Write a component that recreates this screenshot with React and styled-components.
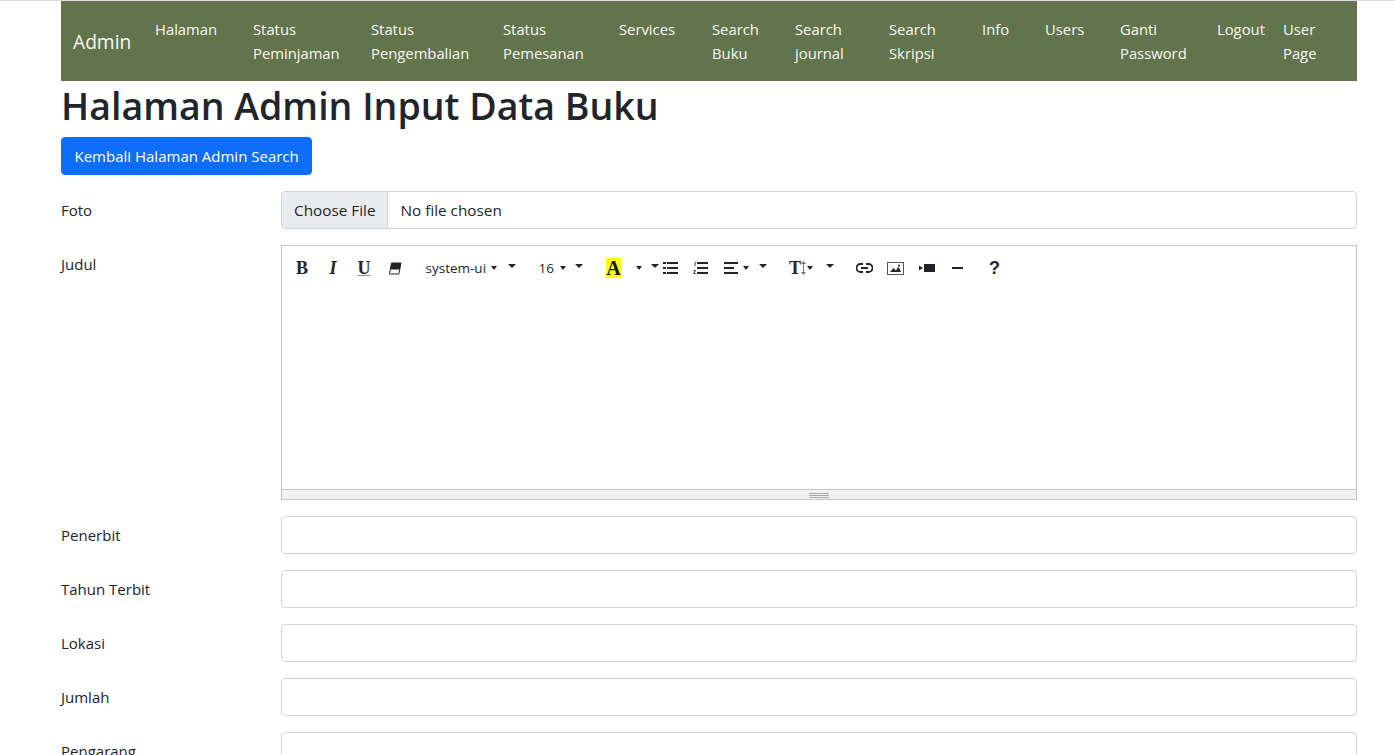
import React from 'react';
import styled, { createGlobalStyle } from 'styled-components';

const GlobalStyle = createGlobalStyle`
  html, body {
    margin: 0;
    height: 755px;
    overflow: hidden;
    background: #fff;
  }
  body {
    border-top: 1px solid #dcdcdc;
    box-sizing: border-box;
    color: #212529;
    font-family: "Open Sans", "Noto Sans", sans-serif;
    font-size: 15px;
    line-height: 24px;
  }
  * { box-sizing: border-box; }
`;

const Page = styled.div`
  width: 1296px;
  margin-left: 61px;
`;

// navbar
const Navbar = styled.nav`
  display: flex;
  align-items: flex-start;
  height: 80px;
  padding: 16px 0 0 12px;
  background: #62744b;
  color: #f8f9f2;
  font-size: 14.8px;
`;

const Brand = styled.a`
  width: 82px;
  padding-top: 9px;
  font-size: 19.2px;
  line-height: 32px;
`;

const NavItem = styled.a`
  width: ${p => p.$w}px;
  white-space: nowrap;
`;

const Title = styled.h1`
  margin: 0 0 6px;
  font-size: 37.5px;
  font-weight: 600;
  line-height: 50px;
`;

const BackButton = styled.button`
  display: block;
  height: 38px;
  margin-bottom: 16px;
  padding: 0 12.5px;
  border: 1px solid #0d6efd;
  border-radius: 4px;
  background: #0d6efd;
  color: #fff;
  font: inherit;
`;

// form
const Row = styled.div`
  display: grid;
  grid-template-columns: 196px 1fr;
  column-gap: 24px;
  margin-bottom: 16px;
`;

const Label = styled.label`
  padding-top: 7px;
`;

const Input = styled.input`
  display: block;
  width: 100%;
  height: 38px;
  padding: 6px 12px;
  border: 1px solid #ced4da;
  border-radius: 4px;
  background: #fff;
  color: #212529;
  font: inherit;
  font-size: 15.3px;

  &::file-selector-button {
    height: 38px;
    margin: -7px 12px -6px -12px;
    padding: 6px 12px;
    border: 0;
    border-right: 1px solid #ced4da;
    background: #e9ecef;
    color: #212529;
    font: inherit;
  }
`;

// editor
const Editor = styled.div`
  display: flex;
  flex-direction: column;
  height: 255px;
  border: 1px solid #c4c4c4;
`;

const Toolbar = styled.div`
  display: flex;
  align-items: center;
  height: 30px;
  margin-top: 7px;
  padding-left: 4.5px;
`;

const Tool = styled.span`
  display: flex;
  flex: none;
  align-items: center;
  justify-content: ${p => (p.$start ? 'flex-start' : 'center')};
  width: ${p => p.$w || 31}px;
  height: 30px;
  margin-left: ${p => p.$ml || 0}px;
  padding-left: ${p => p.$pl || 0}px;
  color: #212529;
  font-size: 13.5px;
  white-space: nowrap;
`;

// $small is the caret inside a button, the other one is the dropdown toggle
const Caret = styled.i`
  flex: none;
  width: 0;
  height: 0;
  margin: ${p => (p.$small ? `0 0 0 ${p.$ml || 5}px` : '0 0 4px')};
  border-top: 4px solid #212529;
  border-left: ${p => (p.$small ? 3.5 : 4)}px solid transparent;
  border-right: ${p => (p.$small ? 3.5 : 4)}px solid transparent;
`;

const Glyph = styled.b`
  font-family: "Liberation Serif", serif;
  font-size: 18px;
  font-style: ${p => (p.$italic ? 'italic' : 'normal')};
  font-weight: 700;
  line-height: 20px;
  text-decoration: ${p => (p.$underline ? 'underline' : 'none')};
  text-decoration-color: #8a8d90;
`;

const ColorGlyph = styled(Glyph)`
  display: block;
  width: 15px;
  height: 20px;
  background: #ffff00;
  color: #111;
  font-size: 20px;
  text-align: center;
`;

const Help = styled.b`
  font-family: "Liberation Sans", sans-serif;
  font-size: 18px;
`;

const EditArea = styled.div`
  flex: 1;
`;

const ResizeBar = styled.div`
  display: flex;
  flex-direction: column;
  align-items: center;
  gap: 1px;
  height: 10px;
  padding-top: 3px;
  border-top: 1px solid #c4c4c4;
  background: #f2f2f2;
`;

const Grip = styled.i`
  width: 20px;
  height: 1px;
  background: #a8a8a8;
`;

const Svg = styled.svg`
  display: block;
  fill: #212529;
`;

const EraserIcon = () => (
  <Svg width="14" height="13" viewBox="0 0 14 13">
    <path d="M3.500 1h9.500l-2.200 11H1.500z" fill="none" stroke="#212529" />
    <path d="M3.500 1h9.500l-1.200 6.500H2.300z" />
  </Svg>
);

const UlIcon = () => (
  <Svg width="15" height="14" viewBox="0 0 15 14">
    <rect x="0" y="1" width="3" height="2" />
    <rect x="0" y="6" width="3" height="2" />
    <rect x="0" y="11" width="3" height="2" />
    <rect x="4" y="1" width="11" height="2" />
    <rect x="4" y="6" width="11" height="2" />
    <rect x="4" y="11" width="11" height="2" />
  </Svg>
);

const OlIcon = () => (
  <Svg width="15" height="14" viewBox="0 0 15 14">
    <path d="M1.500 1 L2.500 .5 V5 H1.700 V1.700 L1.500 1.800z" />
    <path d="M.5 9h2.200v.7l-1.300 2.500h1.400V13H.4v-.7l1.300-2.500H.5z" />
    <rect x="4" y="1" width="11" height="2" />
    <rect x="4" y="6" width="11" height="2" />
    <rect x="4" y="11" width="11" height="2" />
  </Svg>
);

const AlignIcon = () => (
  <Svg width="14" height="12" viewBox="0 0 14 12">
    <rect x="0" y="0" width="14" height="2" />
    <rect x="0" y="5" width="10" height="2" />
    <rect x="0" y="10" width="14" height="2" />
  </Svg>
);

const HeightIcon = () => (
  <Svg width="5" height="14" viewBox="0 0 5 14">
    <path d="M2.500 0 5 3H3v8h2l-2.500 3L0 11h2V3H0z" fill="#777" />
  </Svg>
);

const LinkIcon = () => (
  <Svg width="17" height="10" viewBox="0 0 17 10">
    <path
      d="M7 1H4.500a4 4 0 0 0 0 8H7M10 1h2.500a4 4 0 0 1 0 8H10M5 5h7"
      fill="none"
      stroke="#212529"
      strokeWidth="1.800"
    />
  </Svg>
);

const PictureIcon = () => (
  <Svg width="17" height="13" viewBox="0 0 17 13">
    <rect x=".5" y=".5" width="16" height="12" fill="none" stroke="#555" />
    <path d="M3 10l3.500-4 2.500 2.500 2.500-4L14 10z" />
    <circle cx="12" cy="3.500" r="1" />
  </Svg>
);

const VideoIcon = () => (
  <Svg width="16" height="10" viewBox="0 0 16 10">
    <rect x="5" y="1" width="11" height="8" />
    <path d="M0 2.500 4 5 0 7.500z" />
  </Svg>
);

const MinusIcon = () => (
  <Svg width="11" height="2" viewBox="0 0 11 2">
    <rect width="11" height="2" />
  </Svg>
);

const navItems = [
  { w: 98, lines: ['Halaman'] },
  { w: 118, lines: ['Status', 'Peminjaman'] },
  { w: 132, lines: ['Status', 'Pengembalian'] },
  { w: 116, lines: ['Status', 'Pemesanan'] },
  { w: 93, lines: ['Services'] },
  { w: 83, lines: ['Search', 'Buku'] },
  { w: 94, lines: ['Search', 'journal'] },
  { w: 93, lines: ['Search', 'Skripsi'] },
  { w: 63, lines: ['Info'] },
  { w: 75, lines: ['Users'] },
  { w: 97, lines: ['Ganti', 'Password'] },
  { w: 66, lines: ['Logout'] },
  { w: 60, lines: ['User', 'Page'] },
];

const fields = ['Penerbit', 'Tahun Terbit', 'Lokasi', 'Jumlah', 'Pengarang'];

function App() {
  return (
    <Page>
      <GlobalStyle />
      <Navbar>
        <Brand>Admin</Brand>
        {navItems.map(item => (
          <NavItem key={item.lines.join(' ')} $w={item.w}>
            {item.lines.map(line => (
              <div key={line}>{line}</div>
            ))}
          </NavItem>
        ))}
      </Navbar>
      <Title>Halaman Admin Input Data Buku</Title>
      <BackButton type="button">Kembali Halaman Admin Search</BackButton>
      <Row>
        <Label>Foto</Label>
        <Input type="file" />
      </Row>
      <Row>
        <Label>Judul</Label>
        <Editor>
          <Toolbar>
            <Tool><Glyph>B</Glyph></Tool>
            <Tool><Glyph $italic>I</Glyph></Tool>
            <Tool><Glyph $underline>U</Glyph></Tool>
            <Tool><EraserIcon /></Tool>
            <Tool $w={92} $pl={15} $start>system-ui<Caret $small /></Tool>
            <Tool $w={18}><Caret /></Tool>
            <Tool $w={50} $pl={18} $start>16<Caret $small $ml={6} /></Tool>
            <Tool $w={17}><Caret /></Tool>
            <Tool $ml={10.5}><ColorGlyph>A</ColorGlyph></Tool>
            <Tool $w={19}><Caret $small $ml={1} /></Tool>
            <Tool $w={14}><Caret /></Tool>
            <Tool $w={16}><UlIcon /></Tool>
            <Tool $w={30} $ml={7}><OlIcon /></Tool>
            <Tool $w={40} $pl={9} $start><AlignIcon /><Caret $small /></Tool>
            <Tool $w={16}><Caret /></Tool>
            <Tool $w={33} $ml={18} $start><Glyph>T</Glyph><HeightIcon /><Caret $small $ml={1} /></Tool>
            <Tool $w={16}><Caret /></Tool>
            <Tool $ml={11}><LinkIcon /></Tool>
            <Tool><PictureIcon /></Tool>
            <Tool><VideoIcon /></Tool>
            <Tool><MinusIcon /></Tool>
            <Tool $ml={6}><Help>?</Help></Tool>
          </Toolbar>
          <EditArea />
          <ResizeBar>
            <Grip />
            <Grip />
            <Grip />
          </ResizeBar>
        </Editor>
      </Row>
      {fields.map(field => (
        <Row key={field}>
          <Label>{field}</Label>
          <Input type="text" />
        </Row>
      ))}
    </Page>
  );
}

export default App;
